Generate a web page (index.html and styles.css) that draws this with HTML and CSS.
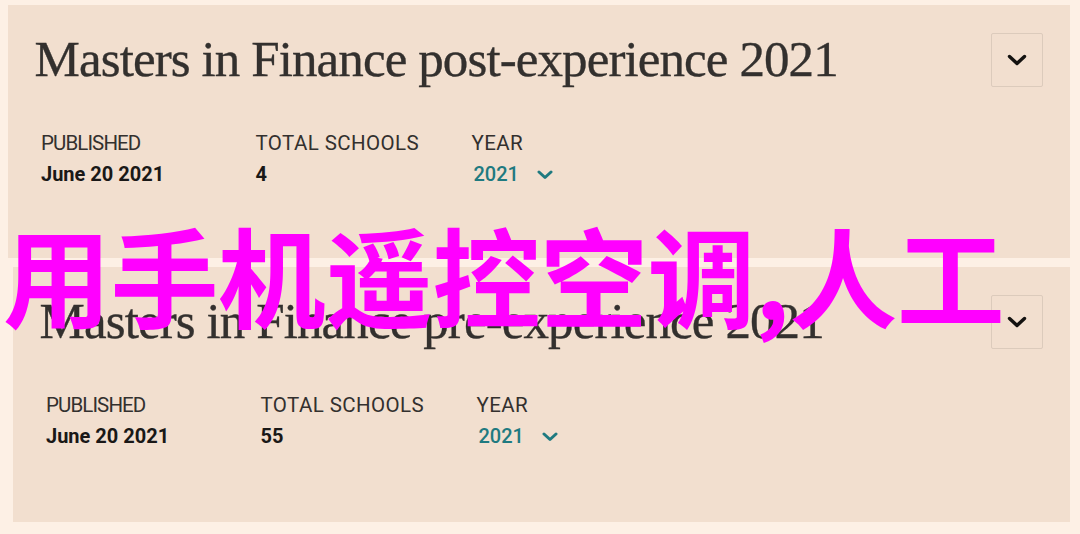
FILE: index.html
```html
<!DOCTYPE html>
<html lang="zh">
<head>
<meta charset="utf-8">
<title>Masters in Finance rankings</title>
<link rel="stylesheet" href="styles.css">
</head>
<body>
<div class="page">
  <section class="card card-a">
    <div class="head">
      <h2 class="title">Masters in Finance post-experience 2021</h2>
      <button class="toggle" type="button" aria-label="Expand">
        <svg class="chev" width="20" height="12" viewBox="0 0 20 12"><path d="M2.5 2.5 L10 9.5 L17.5 2.5" fill="none" stroke="#141210" stroke-width="3.4" stroke-linecap="round" stroke-linejoin="round"/></svg>
      </button>
    </div>
    <div class="meta">
      <div class="col"><div class="label label-narrow">PUBLISHED</div><div class="value">June 20 2021</div></div>
      <div class="col"><div class="label label-wide">TOTAL SCHOOLS</div><div class="value">4</div></div>
      <div class="col"><div class="label label-wide">YEAR</div><div class="value year">2021<svg class="ychev" width="16" height="10" viewBox="0 0 16 10"><path d="M2 2 L8 7.5 L14 2" fill="none" stroke="#1f7a80" stroke-width="3" stroke-linecap="round" stroke-linejoin="round"/></svg></div></div>
    </div>
  </section>
  <section class="card card-b">
    <div class="head">
      <h2 class="title">Masters in Finance pre-experience 2021</h2>
      <button class="toggle" type="button" aria-label="Expand">
        <svg class="chev" width="20" height="12" viewBox="0 0 20 12"><path d="M2.5 2.5 L10 9.5 L17.5 2.5" fill="none" stroke="#141210" stroke-width="3.4" stroke-linecap="round" stroke-linejoin="round"/></svg>
      </button>
    </div>
    <div class="meta">
      <div class="col"><div class="label label-narrow">PUBLISHED</div><div class="value">June 20 2021</div></div>
      <div class="col"><div class="label label-wide">TOTAL SCHOOLS</div><div class="value">55</div></div>
      <div class="col"><div class="label label-wide">YEAR</div><div class="value year">2021<svg class="ychev" width="16" height="10" viewBox="0 0 16 10"><path d="M2 2 L8 7.5 L14 2" fill="none" stroke="#1f7a80" stroke-width="3" stroke-linecap="round" stroke-linejoin="round"/></svg></div></div>
    </div>
  </section>
  <div class="overlay">用手机遥控空调,人工</div>
</div>
</body>
</html>
```

FILE: styles.css
```css
html, body {
  margin: 0;
  padding: 0;
  background: #fdf0e5;
}

.page {
  position: relative;
  width: 1080px;
  height: 534px;
  overflow: hidden;
  padding-top: 5px;
  box-sizing: border-box;
}

.card {
  background: #f2dfcf;
  box-sizing: border-box;
  padding: 0 27px;
}

.card-a {
  margin: 0 10px 0 7.5px;
  height: 252.5px;
}

.card-b {
  margin: 9.5px 10px 0 12.5px;
  height: 255px;
}

.head {
  display: flex;
  justify-content: space-between;
  align-items: flex-start;
  padding-top: 28px;
}

.title {
  margin: 1px 0 0 0;
  font-family: "Liberation Serif", "Times New Roman", serif;
  font-weight: 400;
  font-size: 51px;
  line-height: 51px;
  letter-spacing: -0.9px;
  color: #33302e;
  -webkit-text-stroke: 0.35px #33302e;
}

.toggle {
  width: 52px;
  height: 54px;
  margin: 0;
  padding: 0;
  background: transparent;
  border: 1px solid #dccbbc;
  border-radius: 2px;
  display: flex;
  align-items: center;
  justify-content: center;
}

.meta {
  display: grid;
  grid-template-columns: 214.5px 216px auto;
  padding-left: 6.5px;
  margin-top: 44px;
}

.label {
  font-family: Roboto, "Liberation Sans", sans-serif;
  font-size: 20.5px;
  line-height: 24px;
  color: #33302e;
}

.label-narrow {
  letter-spacing: -0.9px;
}

.label-wide {
  letter-spacing: 0.4px;
}

.value {
  margin-top: 7px;
  font-family: Roboto, "Liberation Sans", sans-serif;
  font-size: 20px;
  line-height: 24px;
  font-weight: 700;
  color: #1a1817;
}

.value.year {
  display: flex;
  align-items: center;
  gap: 18px;
  font-weight: 500;
  color: #1f7a80;
  padding-left: 2px;
}

.ychev {
  display: block;
  margin-top: 1px;
}

.overlay {
  position: absolute;
  left: 3px;
  top: 219px;
  font-family: "Noto Sans CJK SC", "Noto Sans CJK JP", sans-serif;
  font-size: 108px;
  line-height: 108px;
  font-weight: 700;
  letter-spacing: -0.6px;
  color: #ff00ff;
  white-space: nowrap;
}
```
